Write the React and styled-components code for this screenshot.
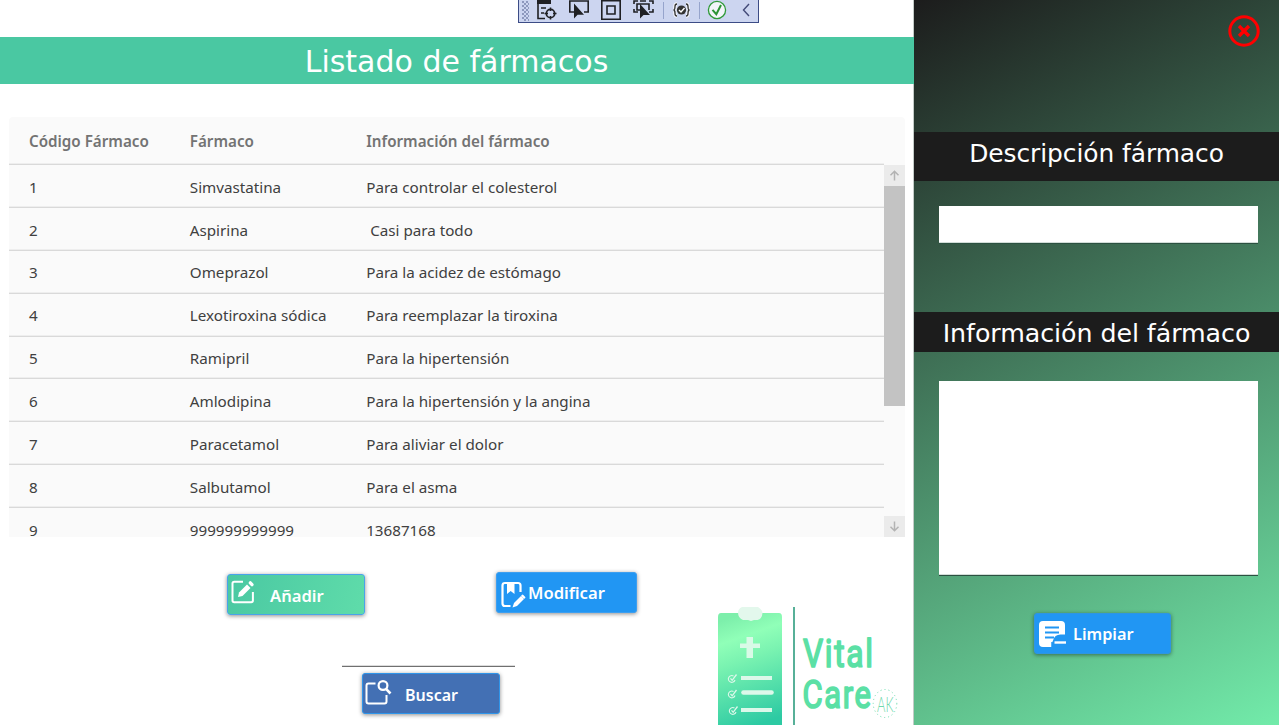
import React from 'react';
import styled, { createGlobalStyle } from 'styled-components';

const GlobalStyle = createGlobalStyle`
  *, *::before, *::after { box-sizing: border-box; }
  body { margin: 0; background: #fff; }
  #root { width: 1279px; height: 725px; overflow: hidden; }
`;

const uiFont = '"Noto Sans", "Open Sans", sans-serif';
const titleFont = '"DejaVu Sans", sans-serif';

const Window = styled.div`
  display: flex;
  width: 1279px;
  height: 725px;
  overflow: hidden;
  font-family: ${uiFont};
`;

const Main = styled.main`
  display: flex;
  flex-direction: column;
  width: 914px;
  border-right: 1px solid #c3cbc7;
`;

const DebugBar = styled.div`
  display: flex;
  align-items: flex-start;
  width: 241px;
  height: 23px;
  margin-left: 518px;
  flex: none;
  background: #ccd5f0;
  border: solid #3c4c86;
  border-width: 0 1px 1px;

  svg { display: block; flex: none; }
`;

const Grip = styled.div`
  width: 7px;
  height: 20px;
  margin: 1px 8px 0 3px;
  background:
    radial-gradient(circle at 1px 1px, #8d98bd 0.9px, transparent 1px) 0 0 / 4px 4px,
    radial-gradient(circle at 1px 1px, #8d98bd 0.9px, transparent 1px) 2px 2px / 4px 4px;
`;

const BarIcon = styled.svg.attrs({ width: 22, height: 22, viewBox: '0 0 22 22', fill: 'none' })`
  margin-right: ${(p) => p.$gap ?? 10}px;
`;

const Divider = styled.div`
  width: 1px;
  height: 17px;
  margin: 2px ${(p) => p.$right}px 0 0;
  background: #96a4cc;
`;

const TitleBand = styled.h1`
  margin: 14px -1px 0 0;
  height: 47px;
  flex: none;
  background: #4ac8a2;
  color: #fff;
  font: 400 30px/50px ${titleFont};
  text-align: center;
  text-indent: -1px;
`;

const Table = styled.section`
  width: 896px;
  height: 420px;
  margin: 33px 0 0 9px;
  flex: none;
  overflow: hidden;
  background: #fafafa;
  border-radius: 4px 4px 0 0;
`;

const Row = styled.div`
  display: grid;
  grid-template-columns: 160.8px 176.4px 1fr;
  align-items: center;
  width: 875px;
  height: 42.87px;
  padding: 1.3px 0 0 20px;
  border-bottom: 1px solid #d9d9d9;
  box-shadow: inset 0 -1px #eeeeee;
  color: #404040;
  font-size: 15.2px;
  white-space: pre;
`;

const HeadRow = styled(Row)`
  height: 48.1px;
  padding-top: 1.6px;
  color: #737373;
  font-weight: 600;
`;

const TableBody = styled.div`
  display: flex;
  height: 371.9px;
  overflow: hidden;
`;

const Rows = styled.div`
  width: 875px;
  flex: none;
`;

const Scrollbar = styled.div`
  display: flex;
  flex-direction: column;
  width: 21px;
`;

const ScrollButton = styled.div`
  display: grid;
  place-items: center;
  height: 21px;
  margin-top: ${(p) => (p.$end ? 'auto' : 0)};
  background: #ebebeb;
`;

const Thumb = styled.div`
  height: 220px;
  background: #c3c3c3;
`;

const Footer = styled.footer`
  display: flex;
  flex: 1;
`;

const Actions = styled.div`
  width: 717px;
  flex: none;
`;

const ActionRow = styled.div`
  display: flex;
  gap: 131px;
  padding: 35px 0 0 227px;
`;

const Button = styled.button`
  display: flex;
  align-items: center;
  width: ${(p) => p.$width}px;
  height: 41px;
  margin: ${(p) => p.$margin ?? 0};
  padding: ${(p) => p.$drop ?? 0}px 0 0;
  border: 1px solid ${(p) => p.$edge};
  border-radius: 3px;
  background: ${(p) => p.$fill};
  box-shadow: 0 1px 4px rgba(0, 0, 0, 0.45);
  color: #fff;
  font: 600 ${(p) => p.$size ?? 16.6}px/24px ${uiFont};

  svg { display: block; flex: none; margin: ${(p) => p.$iconMargin}; }
`;

const SearchInput = styled.div`
  width: 173px;
  height: 2px;
  margin: 50px 0 6px 342px;
  border-top: 1px solid #dcdcdc;
  border-bottom: 1px solid #707070;
`;

const LogoArt = styled.svg`
  display: block;
  margin-top: 63px;
`;

const Side = styled.aside`
  display: flex;
  flex-direction: column;
  align-items: center;
  width: 365px;
  background: linear-gradient(153.28deg, #1c1c1c, #72ebaa);
`;

const CloseButton = styled.button`
  align-self: flex-end;
  width: 32px;
  height: 32px;
  margin: 15px 19px 85px 0;
  padding: 0;
  border: 0;
  background: none;

  svg { display: block; }
`;

const SideTitle = styled.h2`
  width: 365px;
  height: ${(p) => p.$height}px;
  margin: 0;
  flex: none;
  background: #1c1c1c;
  color: #fff;
  font: 400 ${(p) => p.$size}px/${(p) => p.$line}px ${titleFont};
  letter-spacing: -0.06px;
  text-align: center;
  white-space: nowrap;
`;

const Field = styled.div`
  width: 319px;
  height: ${(p) => p.$height}px;
  margin: ${(p) => p.$margin};
  flex: none;
  background: #fff;
  border-bottom: 1px solid #2c5141;
  box-shadow: inset 0 -1px #d2ddd8;
`;

const drugs = [
  ['1', 'Simvastatina', 'Para controlar el colesterol'],
  ['2', 'Aspirina', ' Casi para todo'],
  ['3', 'Omeprazol', 'Para la acidez de estómago'],
  ['4', 'Lexotiroxina sódica', 'Para reemplazar la tiroxina'],
  ['5', 'Ramipril', 'Para la hipertensión'],
  ['6', 'Amlodipina', 'Para la hipertensión y la angina'],
  ['7', 'Paracetamol', 'Para aliviar el dolor'],
  ['8', 'Salbutamol', 'Para el asma'],
  ['9', '999999999999', '13687168'],
];

const dark = '#1f2024';

const braces =
  'M6 4C4 4 4 5 4 6.5S4 10 2.500 10C4 10 4 12 4 13.500S4 16 6 16M15 4c2 0 2 1 2 2.500S17 10 18.500 10C17 10 17 12 17 13.500S17 16 15 16';

function Toolbar() {
  return (
    <DebugBar>
      <Grip />
      <BarIcon>
        <path d="M0 0h14v4H0z" fill={dark} />
        <path d="M1 0v18.500h7M4 8h5M4 13h3" stroke={dark} strokeWidth="1.600" />
        <circle cx="13.500" cy="13.500" r="4.200" stroke={dark} strokeWidth="1.700" />
        <path d="M13.500 7.500v3.500M13.500 16v3.500M7.500 13.500H11M16 13.500h3.500" stroke={dark} strokeWidth="1.500" />
      </BarIcon>
      <BarIcon>
        <path d="M5 12H.8V1h18.400v11H15" stroke={dark} strokeWidth="1.600" />
        <path d="M5 3.500v15l3.600-3.800H15z" fill={dark} />
      </BarIcon>
      <BarIcon>
        <path d="M.8.8h18.400v18.400H.8z" stroke={dark} strokeWidth="1.600" />
        <path d="M6 6h8v8H6z" stroke={dark} strokeWidth="1.600" />
      </BarIcon>
      <BarIcon $gap={8}>
        <path d="M1 4V1h4M7 1h6M16 1h4v3M1 9v3h4M16 12h4V9" stroke={dark} strokeWidth="1.600" />
        <path d="M7 10H4V4h12v6" stroke={dark} strokeWidth="1.600" />
        <path d="M7 4v14.500l3.500-3.500H17z" fill={dark} />
      </BarIcon>
      <Divider $right={7} />
      <BarIcon $gap={6}>
        <path d={braces} stroke="#f4f5fb" strokeWidth="3.500" />
        <path d={braces} stroke="#333" strokeWidth="1.300" />
        <circle cx="10.500" cy="10" r="4.600" fill="#333" />
        <path d="M8 10l2 2 3.500-4" stroke="#fff" strokeWidth="1.400" />
      </BarIcon>
      <Divider $right={7} />
      <BarIcon $gap={12}>
        <circle cx="10" cy="10" r="8.600" fill="#f2f5fa" stroke="#2f9a38" strokeWidth="1.300" />
        <path d="M5.500 9.800l3.800 4.400L14 5" stroke="#2b9334" strokeWidth="2" />
      </BarIcon>
      <svg width="10" height="22" viewBox="0 0 10 22" fill="none">
        <path d="M8 4L2.500 10 8 16" stroke="#434a78" strokeWidth="1.400" />
      </svg>
    </DebugBar>
  );
}

function Arrow({ down }) {
  return (
    <svg width="11" height="11" viewBox="0 0 11 11" fill="none" stroke="#b3b3b3" strokeWidth="1.500">
      <path d={down ? 'M5.500 .5v9M1.500 5.800l4 4 4-4' : 'M5.500 10.500v-9M1.500 5.200l4-4 4 4'} />
    </svg>
  );
}

function EditIcon() {
  return (
    <svg width="24" height="24" viewBox="0 0 24 24" fill="none" stroke="#fff">
      <path d="M12 1.800H3.200Q1.500 1.800 1.500 3.500v17q0 1.700 1.700 1.700h17q1.700 0 1.700-1.700V12" strokeWidth="2" />
      <path d="M7 17l1-4.500 8-8 3.500 3.500-8 8z" fill="#fff" stroke="none" />
      <path d="M19.300 2.900l1.700 1.700" strokeWidth="3.400" strokeLinecap="round" />
    </svg>
  );
}

function BookmarkEditIcon() {
  return (
    <svg width="25" height="27" viewBox="0 0 25 27" fill="none" stroke="#fff">
      <path d="M9.500 25H4q-2.500 0-2.500-2.500v-18Q1.500 2 4 2h13q2.500 0 2.500 2.500V11" strokeWidth="2.200" />
      <path d="M6 2h7.500v11L9.700 10 6 13z" fill="#fff" stroke="none" />
      <path d="M11.500 26.500l1.500-4.500 7-7 3 3-7 7z" fill="#fff" stroke="none" />
      <path d="M21.500 14.800l1.700 1.700" strokeWidth="2.400" strokeLinecap="round" />
    </svg>
  );
}

function SearchBoxIcon() {
  return (
    <svg width="27" height="27" viewBox="0 0 27 27" fill="none" stroke="#fff" strokeWidth="2">
      <path d="M10.500 4.500H3.500Q1.500 4.500 1.500 6.500v16q0 2 2 2h16q2 0 2-2V16" />
      <circle cx="18" cy="6.500" r="4.400" strokeWidth="2.200" />
      <path d="M21 9.800l4.500 4.700" strokeWidth="2.600" />
    </svg>
  );
}

function ClearIcon() {
  return (
    <svg width="28" height="27" viewBox="0 0 28 27" fill="none">
      <path d="M4 0h18q4 0 4 4v9.500h-4.500q-6 0-7.500 6L13 22v4H4q-4 0-4-4V4q0-4 4-4z" fill="#fff" />
      <path d="M6 6.500h14M6 11.500h14M6 16.500h9" stroke="#2196f3" strokeWidth="2" />
      <path d="M13 26v-5M16 18h11" stroke="#2196f3" strokeWidth="1.500" />
      <path d="M15.500 21.500h11.500" stroke="#fff" strokeWidth="2.400" />
    </svg>
  );
}

function Check({ x, y }) {
  return (
    <g transform={`translate(${x} ${y})`} fill="none" stroke="#ddf8ea">
      <path d="M5.500 1.500A3.400 3.400 0 1 0 7 5.500" strokeWidth="1.100" />
      <path d="M2.500 3.800l1.700 2L8.500 0" strokeWidth="1.300" />
    </g>
  );
}

function Logo() {
  return (
    <LogoArt width="190" height="125" viewBox="12 0 190 125">
      <defs>
        <linearGradient id="board" x1=".4" y1="0" x2=".6" y2="1">
          <stop offset="0" stopColor="#7defab" />
          <stop offset=".2" stopColor="#90ffb8" />
          <stop offset=".4" stopColor="#7af3b1" />
          <stop offset="1" stopColor="#2dcaa3" />
        </linearGradient>
      </defs>
      <path d="M16 13h58q3 0 3 4v108H13V17q0-4 3-4z" fill="url(#board)" />
      <path d="M37 7h16q4.500 3 4.500 6-.5 6-5 7H49l-3 1-3-1h-5q-5-2-5-7.500Q33 9 37 7z" fill="#e3f8ec" />
      <path d="M41.500 37h6.500v6.500h7V48h-7v10h-6.500V48H35v-4.500h6.500z" fill="#d9fae7" />
      <g stroke="#dcf8ea" strokeWidth="4.200">
        <path d="M36 78h31M36 110h31" />
        <path d="M38.500 92.500h28" strokeWidth="4.600" strokeLinecap="round" />
      </g>
      <Check x={23} y={74.500} />
      <Check x={23} y={90} />
      <Check x={24} y={106.500} />
      <path d="M89 7v118" stroke="#57b098" strokeWidth="2" />
      <g
        fill="#5be0a5" stroke="#5be0a5" strokeWidth="1.700" strokeLinejoin="round"
        fontFamily='Roboto, "Liberation Sans", sans-serif' fontSize="38.500"
      >
        <text x="98" y="66.700" textLength="71.500" lengthAdjust="spacingAndGlyphs" letterSpacing="2">Vital</text>
        <text x="97.500" y="107.700" textLength="70" lengthAdjust="spacingAndGlyphs" letterSpacing="2">Care</text>
      </g>
      <ellipse cx="180" cy="103.500" rx="11.800" ry="14" fill="none" stroke="#66dcaa" strokeDasharray="1 3" />
      <text
        x="172" y="111.500" textLength="16.500" lengthAdjust="spacingAndGlyphs" fill="#6fd8ac"
        fontFamily='Lato, sans-serif' fontWeight="300" fontSize="21.500"
      >AK</text>
    </LogoArt>
  );
}

export default function App() {
  return (
    <Window>
      <GlobalStyle />
      <Main>
        <Toolbar />
        <TitleBand>Listado de fármacos</TitleBand>
        <Table>
          <HeadRow>
            <span>Código Fármaco</span>
            <span>Fármaco</span>
            <span>Información del fármaco</span>
          </HeadRow>
          <TableBody>
            <Rows>
              {drugs.map(([code, name, info]) => (
                <Row key={code}>
                  <span>{code}</span>
                  <span>{name}</span>
                  <span>{info}</span>
                </Row>
              ))}
            </Rows>
            <Scrollbar>
              <ScrollButton><Arrow /></ScrollButton>
              <Thumb />
              <ScrollButton $end><Arrow down /></ScrollButton>
            </Scrollbar>
          </TableBody>
        </Table>
        <Footer>
          <Actions>
            <ActionRow>
              <Button
                $width={138} $margin="2px 0 0" $edge="#4aa3ea" $drop={2}
                $fill="linear-gradient(106deg, #4ac8a2, #5fdcaa)" $iconMargin="0 15px 7px 3px"
              >
                <EditIcon />Añadir
              </Button>
              <Button $width={141} $edge="#3d9ff0" $fill="#2196f3" $iconMargin="4px 2px 0 4px" $margin="0 0 2px">
                <BookmarkEditIcon />Modificar
              </Button>
            </ActionRow>
            <SearchInput />
            <Button
              $width={138} $margin="0 0 0 362px" $edge="#2f95ea" $fill="#4370b4" $drop={2}
              $size={16} $iconMargin="0 13px 4px 2px"
            >
              <SearchBoxIcon />Buscar
            </Button>
          </Actions>
          <Logo />
        </Footer>
      </Main>
      <Side>
        <CloseButton aria-label="Cerrar">
          <svg width="32" height="32" viewBox="0 0 32 32" fill="none" stroke="#ff0000">
            <circle cx="16" cy="16" r="14.200" strokeWidth="3" />
            <path d="M11 11l10 10M21 11L11 21" strokeWidth="3.400" />
          </svg>
        </CloseButton>
        <SideTitle $height={49} $size={24.9} $line={43}>Descripción fármaco</SideTitle>
        <Field $height={38} $margin="25px 0 68px 4px" />
        <SideTitle $height={40} $size={25.3} $line={43}>Información del fármaco</SideTitle>
        <Field $height={195} $margin="29px 0 37px 4px" />
        <Button
          $width={137} $edge="#2f95e0" $fill="#2196f3" $size={16.3}
          $margin="0 0 0 12px" $iconMargin="1px 6px 0 4px"
        >
          <ClearIcon />Limpiar
        </Button>
      </Side>
    </Window>
  );
}
